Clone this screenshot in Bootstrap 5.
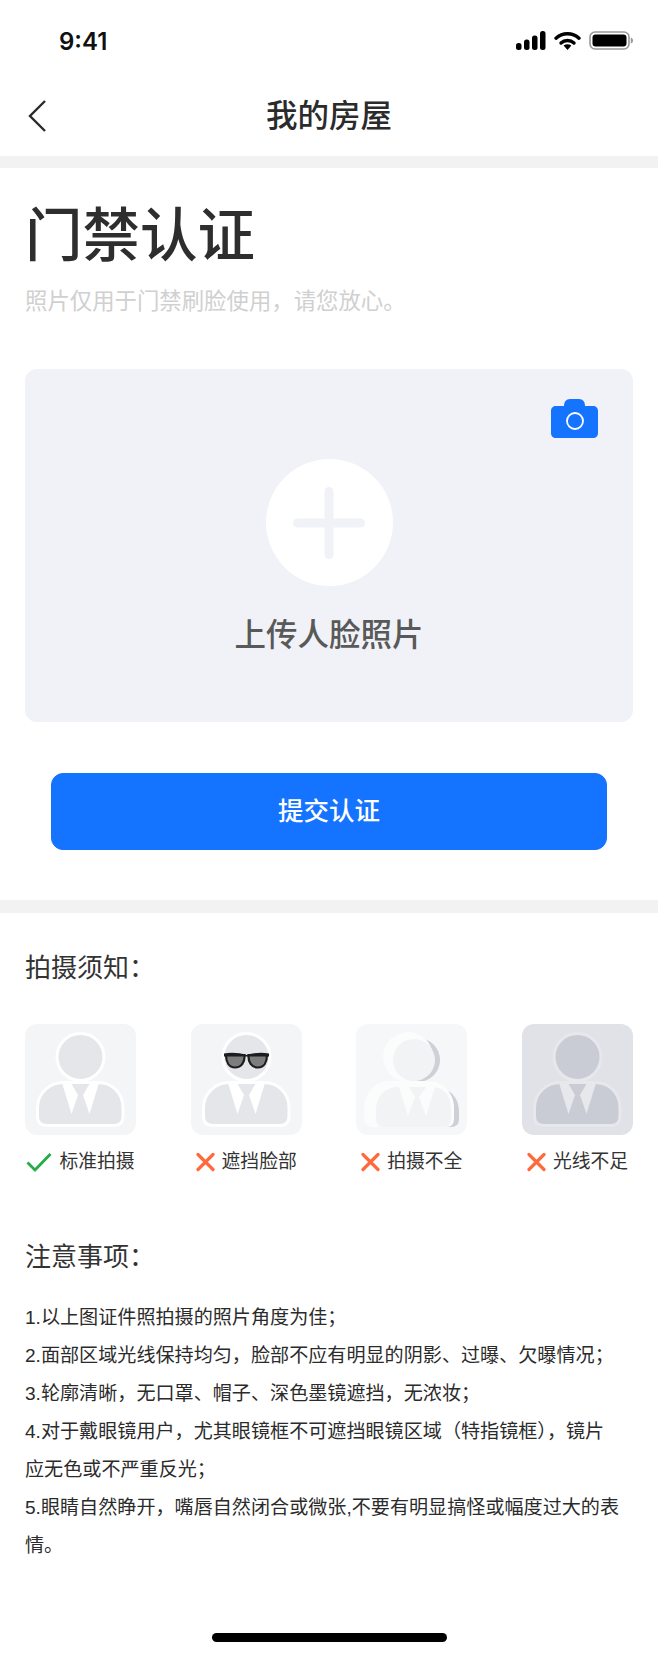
<!DOCTYPE html>
<html lang="zh-CN">
<head>
  <meta charset="UTF-8">
  <title>我的房屋</title>
  <link href="https://cdn.jsdelivr.net/npm/bootstrap@5.3.3/dist/css/bootstrap.min.css" rel="stylesheet">
  <style>
    body {
      width: 658px;
      height: 1658px;
      overflow: hidden;
      background-color: #fff;
      color: #333;
      font-family: "Liberation Sans", "Noto Sans CJK SC", sans-serif;
    }

    /* status bar */
    .status-strip {
      height: 76px;
      padding: 31px 25px 0 59px;
    }
    .status-time {
      font-family: Inter, "Liberation Sans", sans-serif;
      font-size: 24px;
      font-weight: 600;
      line-height: 22px;
      color: #111;
    }

    /* nav */
    .top-nav {
      height: 80px;
      padding-left: 28px;
    }
    .top-nav-title {
      font-size: 31.5px;
      font-weight: 500;
      line-height: 40px;
      color: #2b2b2b;
      left: 0;
      right: 0;
      top: 20px;
    }

    .gray-band { height: 12px; background-color: #f2f2f2; }
    .gray-band-lower { height: 13px; }

    .page-block { padding: 33px 25px 50px; }
    .main-title {
      font-size: 57.5px;
      font-weight: 500;
      line-height: 70px;
      color: #2e2e2e;
      margin: 0 0 16px;
    }
    .sub-title {
      font-size: 22.4px;
      line-height: 30px;
      color: #d0d0d0;
      margin: 0 0 52px;
    }

    /* upload box */
    .upload-box {
      height: 353px;
      background-color: #f0f2f7;
      border-radius: 12px;
      padding-top: 90px;
    }
    .camera-mark { top: 30px; right: 35px; }
    .plus-circle {
      width: 127px;
      height: 127px;
      background-color: #fff;
    }
    .upload-label {
      font-size: 31.5px;
      font-weight: 500;
      line-height: 44px;
      color: #595959;
      margin-top: 27px;
    }

    .btn-submit {
      display: block;
      width: 556px;
      height: 77px;
      margin: 51px auto 0;
      background-color: #1473ff;
      border-color: #1473ff;
      border-radius: 12px;
      font-size: 25.5px;
      font-weight: 500;
      color: #fff;
    }

    /* notes */
    .notes-block { padding: 35px 25px 0; }
    .notes-heading {
      font-size: 26px;
      font-weight: 400;
      line-height: 40px;
      color: #333;
      margin: 0;
    }
    .shot-row { margin-top: 36px; }
    .shot-item { width: 111px; }
    .shot-tile { display: block; width: 111px; height: 111px; }
    .shot-caption {
      margin-top: 13px;
      height: 28px;
      gap: 7px;
      font-size: 18.8px;
      line-height: 28px;
      color: #333;
      white-space: nowrap;
    }
    .notes-after { margin-top: 61px; }
    .rule-list {
      margin: 22px 4px 0 0;
      font-size: 19.1px;
      line-height: 38px;
      color: #2b2b2b;
    }

    .home-bar {
      width: 235px;
      height: 9px;
      margin: 68px auto 0;
      background-color: #000;
      border-radius: 5px;
    }
  </style>
</head>
<body>

<!-- 状态栏 -->
<div class="status-strip d-flex justify-content-between align-items-start">
  <span class="status-time">9:41</span>
  <div class="d-flex align-items-start" style="gap:8px">
    <svg width="30" height="19" viewBox="0 0 30 19">
      <rect x="0" y="12" width="5.5" height="7" rx="2.5" fill="#000"/>
      <rect x="8" y="8.5" width="5.5" height="10.5" rx="2.5" fill="#000"/>
      <rect x="16" y="4.5" width="5.5" height="14.5" rx="2.5" fill="#000"/>
      <rect x="24" y="0" width="5.5" height="19" rx="2.5" fill="#000"/>
    </svg>
    <svg width="27" height="19" viewBox="0 0 27 19">
      <path d="M2 7.2C8.4 1.2 18.6 1.2 25 7.2" fill="none" stroke="#000" stroke-width="3.4" stroke-linecap="round"/>
      <path d="M7 12C10.6 8.6 16.4 8.6 20 12" fill="none" stroke="#000" stroke-width="3.4" stroke-linecap="round"/>
      <path d="M9.6 14.6L13.5 19L17.4 14.6C15 12.8 12 12.8 9.6 14.6Z" fill="#000"/>
    </svg>
    <svg width="44" height="19" viewBox="0 0 44 19">
      <rect x="1" y="1" width="39" height="17" rx="5" fill="none" stroke="#999" stroke-width="1.6"/>
      <rect x="3.5" y="3.5" width="34" height="12" rx="3" fill="#000"/>
      <path d="M41.8 6.5C43.3 7 44 8 44 9.5C44 11 43.3 12 41.8 12.5Z" fill="#999"/>
    </svg>
  </div>
</div>

<!-- 导航 -->
<div class="top-nav position-relative d-flex align-items-center">
  <svg width="18" height="32" viewBox="0 0 18 32" class="position-relative" style="z-index:1">
    <path d="M17 1L2 16L17 31" fill="none" stroke="#2b2b2b" stroke-width="2.4"/>
  </svg>
  <div class="top-nav-title position-absolute text-center">我的房屋</div>
</div>
<div class="gray-band"></div>

<!-- 上传 -->
<div class="page-block">
  <h1 class="main-title">门禁认证</h1>
  <p class="sub-title">照片仅用于门禁刷脸使用&#xFF0C;请您放心。</p>

  <div class="upload-box position-relative d-flex flex-column align-items-center">
    <svg class="camera-mark position-absolute" width="47" height="39" viewBox="0 0 47 39">
      <path d="M5 7H13C13 3 15 0 19 0H28C32 0 34 3 34 7H42C45 7 47 9 47 12V34C47 37 45 39 42 39H5C2 39 0 37 0 34V12C0 9 2 7 5 7Z" fill="#1473ff"/>
      <circle cx="24" cy="22" r="8" fill="none" stroke="#fff" stroke-width="1.8"/>
    </svg>
    <div class="plus-circle rounded-circle d-flex align-items-center justify-content-center">
      <svg width="72" height="72" viewBox="0 0 72 72">
        <rect x="31.5" y="0" width="9" height="72" rx="4.5" fill="#f0f2f7"/>
        <rect x="0" y="31.5" width="72" height="9" rx="4.5" fill="#f0f2f7"/>
      </svg>
    </div>
    <div class="upload-label">上传人脸照片</div>
  </div>

  <button type="button" class="btn btn-primary btn-submit">提交认证</button>
</div>
<div class="gray-band gray-band-lower"></div>

<!-- 拍摄须知 -->
<div class="notes-block">
  <h2 class="notes-heading">拍摄须知&#xFF1A;</h2>

  <div class="shot-row d-flex justify-content-between">
    <div class="shot-item">
      <svg class="shot-tile" viewBox="0 0 111 111">
        <rect width="111" height="111" rx="12" fill="#f4f5f7"/>
        <circle cx="55.5" cy="33" r="23.5" fill="#e5e6ea" stroke="#fff" stroke-width="3"/>
        <path d="M12.5 92V84C12.5 68 26 58.5 38 58.5H73C86 58.5 98 68 98 84V92Q98 101.5 89 101.5H22Q12.5 101.5 12.5 92Z" fill="#e5e6ea" stroke="#fff" stroke-width="3"/>
        <path d="M37 59L46.5 90L53 71L46 59ZM74 59L64.5 90L58 71L65 59Z" fill="#fff"/>
      </svg>
      <div class="shot-caption d-flex align-items-center justify-content-center">
        <svg width="26" height="20" viewBox="0 0 26 20"><path d="M1.5 10.5L9 18L24.5 2" fill="none" stroke="#22ad45" stroke-width="2.8"/></svg>
        <span>标准拍摄</span>
      </div>
    </div>

    <div class="shot-item">
      <svg class="shot-tile" viewBox="0 0 111 111">
        <rect width="111" height="111" rx="12" fill="#f4f5f7"/>
        <circle cx="55.5" cy="33" r="23.5" fill="#e5e6ea" stroke="#fff" stroke-width="3"/>
        <path d="M12.5 92V84C12.5 68 26 58.5 38 58.5H73C86 58.5 98 68 98 84V92Q98 101.5 89 101.5H22Q12.5 101.5 12.5 92Z" fill="#e5e6ea" stroke="#fff" stroke-width="3"/>
        <path d="M37 59L46.5 90L53 71L46 59ZM74 59L64.5 90L58 71L65 59Z" fill="#fff"/>
        <!-- 墨镜 -->
        <path d="M35 31H53.5C54 38 50.5 43.5 44 43.5C38 43.5 35 38 35 31ZM57.5 31H76C76 38 73 43.5 67 43.5C60.5 43.5 57 38 57.5 31Z" fill="#7d7d7d" stroke="#1d1d1d" stroke-width="2.2"/>
        <path d="M33 29.5C41 28 49 29 55.5 31C62 29 70 28 78 29.5V32.5H33Z" fill="#1d1d1d"/>
      </svg>
      <div class="shot-caption d-flex align-items-center justify-content-center">
        <svg width="19" height="20" viewBox="0 0 19 20"><path d="M2 2.5L17 17.5M17 2.5L2 17.5" fill="none" stroke="#ff6a3d" stroke-width="3.2" stroke-linecap="round"/></svg>
        <span>遮挡脸部</span>
      </div>
    </div>

    <div class="shot-item">
      <svg class="shot-tile" viewBox="0 0 111 111">
        <rect width="111" height="111" rx="12" fill="#f6f7f9"/>
        <!-- 偏移的人像,前后错开三层 -->
        <circle cx="62" cy="36" r="22" fill="#cdd0d6"/>
        <path d="M30 64H82C94 64 103 74 103 88V95Q103 103 95 103H30Z" fill="#cdd0d6"/>
        <circle cx="52" cy="33" r="25" fill="#fbfcfc"/>
        <path d="M8 92V84C8 68 20 57 34 57H72C86 57 98 68 98 84V95Q98 103 90 103H18Q8 103 8 92Z" fill="#fbfcfc"/>
        <circle cx="58" cy="36" r="21" fill="#f2f3f5"/>
        <path d="M20 90V86C20 72 30 63 42 63H76C88 63 95 72 95 86V94Q95 103 87 103H28Q20 103 20 94Z" fill="#f2f3f5"/>
        <path d="M43 63L52 92L59 73L53 63ZM79 63L70 92L63 73L70 63Z" fill="#fbfcfc"/>
      </svg>
      <div class="shot-caption d-flex align-items-center justify-content-center">
        <svg width="19" height="20" viewBox="0 0 19 20"><path d="M2 2.5L17 17.5M17 2.5L2 17.5" fill="none" stroke="#ff6a3d" stroke-width="3.2" stroke-linecap="round"/></svg>
        <span>拍摄不全</span>
      </div>
    </div>

    <div class="shot-item">
      <svg class="shot-tile" viewBox="0 0 111 111">
        <rect width="111" height="111" rx="12" fill="#e0e2e7"/>
        <circle cx="55.5" cy="33" r="23.5" fill="#c9ccd4" stroke="#e6e8ec" stroke-width="3"/>
        <path d="M12.5 92V84C12.5 68 26 58.5 38 58.5H73C86 58.5 98 68 98 84V92Q98 101.5 89 101.5H22Q12.5 101.5 12.5 92Z" fill="#c9ccd4" stroke="#e6e8ec" stroke-width="3"/>
        <path d="M37 59L46.5 90L53 71L46 59ZM74 59L64.5 90L58 71L65 59Z" fill="#e6e8ec"/>
      </svg>
      <div class="shot-caption d-flex align-items-center justify-content-center">
        <svg width="19" height="20" viewBox="0 0 19 20"><path d="M2 2.5L17 17.5M17 2.5L2 17.5" fill="none" stroke="#ff6a3d" stroke-width="3.2" stroke-linecap="round"/></svg>
        <span>光线不足</span>
      </div>
    </div>
  </div>

  <h2 class="notes-heading notes-after">注意事项&#xFF1A;</h2>
  <div class="rule-list">
    <div>1.以上图证件照拍摄的照片角度为佳&#xFF1B;</div>
    <div>2.面部区域光线保持均匀&#xFF0C;脸部不应有明显的阴影、过曝、欠曝情况&#xFF1B;</div>
    <div>3.轮廓清晰&#xFF0C;无口罩、帽子、深色墨镜遮挡&#xFF0C;无浓妆&#xFF1B;</div>
    <div>4.对于戴眼镜用户&#xFF0C;尤其眼镜框不可遮挡眼镜区域&#xFF08;特指镜框&#xFF09;&#xFF0C;镜片<br>应无色或不严重反光&#xFF1B;</div>
    <div>5.眼睛自然睁开&#xFF0C;嘴唇自然闭合或微张,不要有明显搞怪或幅度过大的表情。</div>
  </div>
</div>

<div class="home-bar"></div>

<script src="https://cdn.jsdelivr.net/npm/bootstrap@5.3.3/dist/js/bootstrap.bundle.min.js"></script>
</body>
</html>
